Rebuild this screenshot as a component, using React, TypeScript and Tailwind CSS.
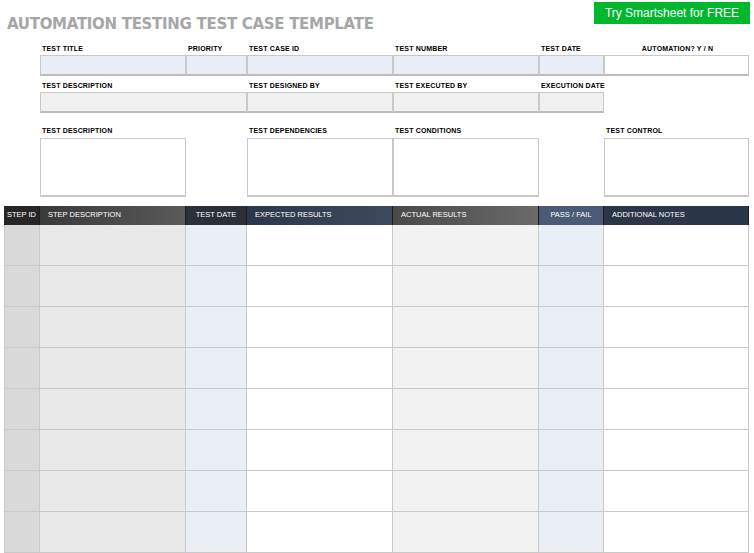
import React from "react";

const cols = "grid grid-cols-[36px_146px_61px_146px_146px_65px_145px]";
const lbl = "text-[7px] leading-[9px] font-bold text-black tracking-wide whitespace-nowrap pb-[1px] pl-[2px]";
const inp = "h-[21px] border border-[#c8c8c8] border-b-2 border-b-[#bdbdbd]";

const heads = [
  { t: "STEP ID", c: "bg-[#262626] justify-center" },
  { t: "STEP DESCRIPTION", c: "bg-gradient-to-r from-[#3a3a3a] to-[#5a5a5a] pl-2" },
  { t: "TEST DATE", c: "bg-[#2a2f38] justify-center" },
  { t: "EXPECTED RESULTS", c: "bg-gradient-to-r from-[#2b384c] to-[#3d4a5e] pl-2" },
  { t: "ACTUAL RESULTS", c: "bg-gradient-to-r from-[#4a4a4a] to-[#6a6a6a] pl-2" },
  { t: "PASS / FAIL", c: "bg-[#4b5b77] justify-center" },
  { t: "ADDITIONAL NOTES", c: "bg-[#2b3649] pl-2" },
];
const cells = ["bg-[#d9d9d9]", "bg-[#e8e8e8]", "bg-[#eaeef5]", "bg-white", "bg-[#f2f2f2]", "bg-[#eaeef5]", "bg-white"];

export default function App() {
  return (
    <div className="w-[754px] h-[553px] bg-white overflow-hidden" style={{ fontFamily: "'Liberation Sans', Arial, sans-serif" }}>
      <div className="flex items-start justify-between pl-[7px] pr-[4px] pt-[2px]">
        <h1 className="text-[15px] font-bold text-[#a6a6a6] mt-[11px]" style={{ fontFamily: "'DejaVu Sans', sans-serif", letterSpacing: "-0.3px" }}>
          AUTOMATION TESTING TEST CASE TEMPLATE
        </h1>
        <div className="w-[156px] h-[22px] bg-[#00b82e] text-white text-[12px] flex items-center justify-center">Try Smartsheet for FREE</div>
      </div>

      <div className="pl-[4px] mt-[8px]">
        <div className={`${cols} items-end`}>
          <div /><div className={lbl}>TEST TITLE</div><div className={lbl}>PRIORITY</div>
          <div className={lbl}>TEST CASE ID</div><div className={lbl}>TEST NUMBER</div><div className={lbl}>TEST DATE</div>
          <div className={`${lbl} text-center`}>AUTOMATION? Y / N</div>
        </div>
        <div className={`${cols} mt-[1px]`}>
          <div /><div className={`${inp} bg-[#e9edf5]`} /><div className={`${inp} bg-[#e9edf5]`} /><div className={`${inp} bg-[#e9edf5]`} />
          <div className={`${inp} bg-[#e9edf5]`} /><div className={`${inp} bg-[#e9edf5]`} /><div className={`${inp} bg-white`} />
        </div>
        <div className={`${cols} mt-[5px] items-end`}>
          <div /><div className={`${lbl} col-span-2`}>TEST DESCRIPTION</div><div className={lbl}>TEST DESIGNED BY</div>
          <div className={lbl}>TEST EXECUTED BY</div><div className={lbl}>EXECUTION DATE</div><div />
        </div>
        <div className={`${cols} mt-[1px]`}>
          <div /><div className={`${inp} bg-[#f0f0f0] col-span-2`} /><div className={`${inp} bg-[#f0f0f0]`} />
          <div className={`${inp} bg-[#f0f0f0]`} /><div className={`${inp} bg-[#f0f0f0]`} /><div />
        </div>
        <div className={`${cols} mt-[13px] items-end`}>
          <div /><div className={lbl}>TEST DESCRIPTION</div><div /><div className={lbl}>TEST DEPENDENCIES</div>
          <div className={lbl}>TEST CONDITIONS</div><div /><div className={lbl}>TEST CONTROL</div>
        </div>
        <div className={`${cols} mt-[2px] h-[59px]`}>
          <div /><div className="border border-[#c8c8c8] border-b-2" /><div /><div className="border border-[#c8c8c8] border-b-2" />
          <div className="border border-[#c8c8c8] border-b-2" /><div /><div className="border border-[#c8c8c8] border-b-2" />
        </div>

        <div className={`${cols} mt-[9px] h-[19px]`}>
          {heads.map((h) => (
            <div key={h.t} className={`${h.c} text-white text-[7.5px] flex items-center border-r border-[#1c1c1c]`}>
              {h.t}
            </div>
          ))}
        </div>
        {Array.from({ length: 8 }).map((_, r) => (
          <div key={r} className={`${cols} h-[41px]`}>
            {cells.map((c, i) => (
              <div key={i} className={`${c} border-r border-b border-[#c9c9c9] ${i === 0 ? "border-l" : ""}`} />
            ))}
          </div>
        ))}
      </div>
    </div>
  );
}
